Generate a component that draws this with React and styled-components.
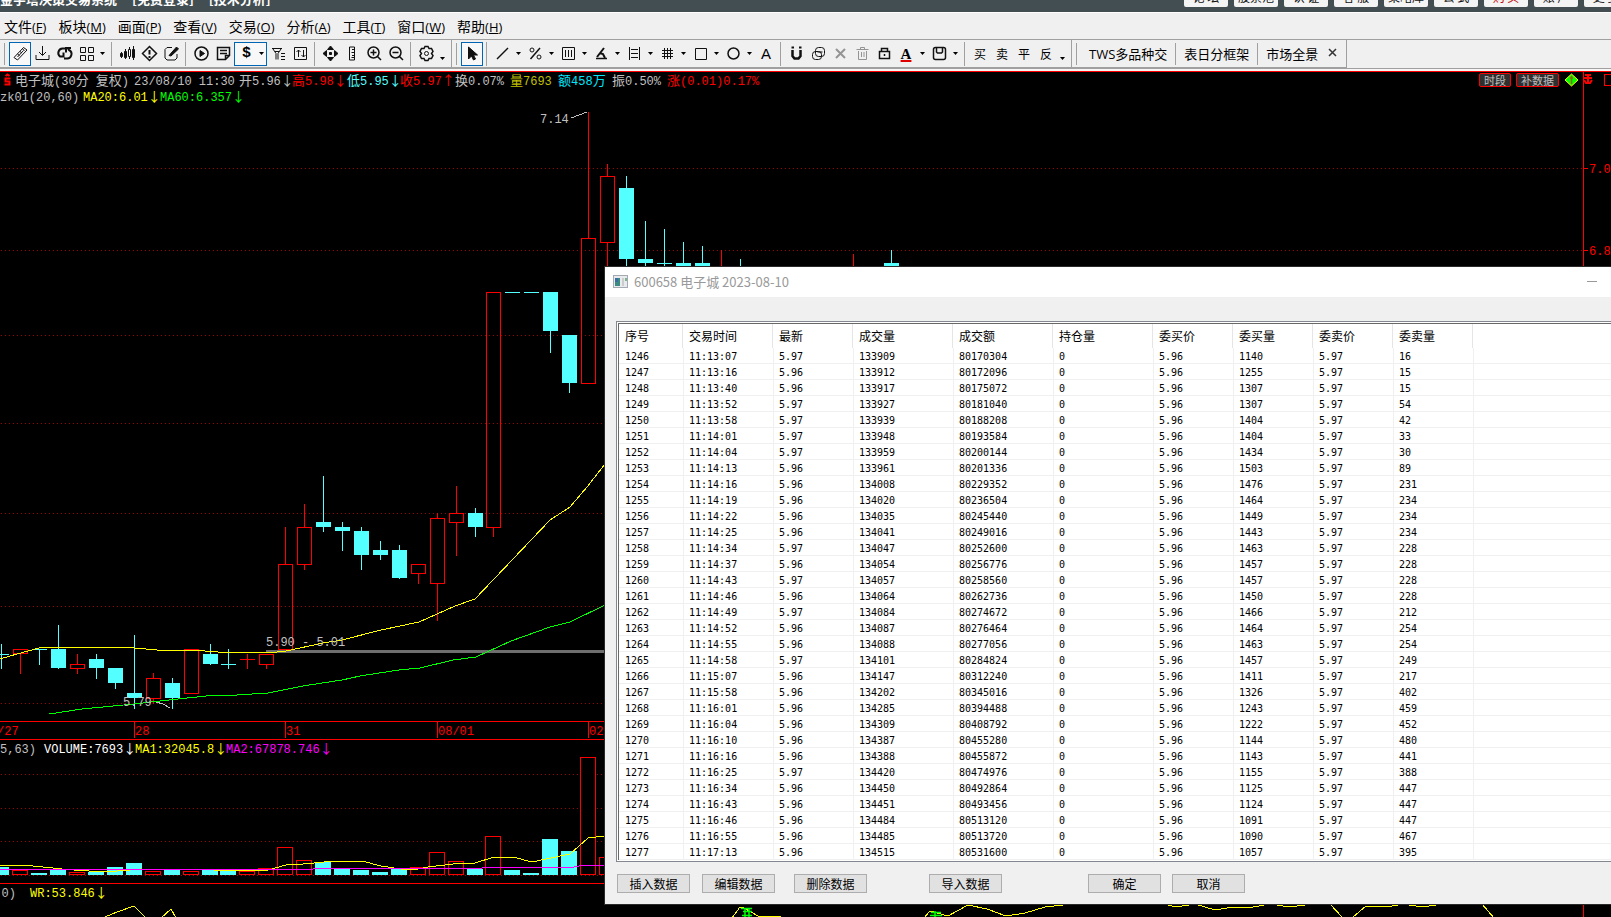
import React from 'react';
import styled, { createGlobalStyle } from 'styled-components';

const RED = '#ff0000';
const CYAN = '#54ffff';
const YELLOW = '#ffff00';
const GREEN = '#00ff00';
const MAGENTA = '#ff00ff';
const GREY = '#c0c0c0';
const DARK_RED = '#a00000';

const menus = [
  ['文件', 'F'], ['板块', 'M'], ['画面', 'P'], ['查看', 'V'], ['交易', 'O'],
  ['分析', 'A'], ['工具', 'T'], ['窗口', 'W'], ['帮助', 'H'],
];

const titleLinks = ['论 坛', '股票池', '认 证', '客 服', '策略库', '公 式', '购 买', '账 户', '更 多'];

const quotes = [
  { text: '开5.96↓', color: GREY, width: 53 },
  { text: '高5.98↓', color: RED, width: 55 },
  { text: '低5.95↓', color: CYAN, width: 53 },
  { text: '收5.97↑', color: RED, width: 55 },
  { text: '换0.07%', color: GREY, width: 55 },
  { text: '量7693', color: '#c0c000', width: 48 },
  { text: '额458万', color: '#00e8ff', width: 54 },
  { text: '振0.50%', color: GREY, width: 55 },
  { text: '涨(0.01)0.17%', color: RED, width: 100 },
];

// [kind, high, body top, body bottom, low]
const candles = [
  ['d', 644, 654, 654, 668], ['u', 649, 649, 653, 673], ['d', 649, 649, 649, 664],
  ['d', 625, 649, 668, 668], ['u', 654, 664, 668, 673], ['d', 654, 659, 668, 678],
  ['d', 668, 668, 683, 688], ['d', 635, 693, 698, 708], ['u', 673, 678, 698, 703],
  ['d', 678, 683, 698, 708], ['u', 649, 649, 693, 693], ['d', 644, 654, 664, 664],
  ['d', 649, 664, 664, 668], ['u', 654, 659, 659, 668], ['u', 654, 654, 664, 668],
  ['u', 527, 564, 649, 649], ['u', 504, 527, 564, 569], ['d', 476, 522, 527, 531],
  ['d', 522, 527, 531, 550], ['d', 527, 531, 555, 569], ['d', 541, 550, 555, 559],
  ['d', 545, 550, 578, 578], ['u', 564, 564, 573, 583], ['u', 513, 518, 583, 620],
  ['u', 486, 513, 522, 555], ['d', 508, 513, 527, 536], ['u', 292, 292, 527, 536],
  ['d', 292, 292, 292, 292], ['d', 292, 292, 292, 292], ['d', 292, 292, 331, 352],
  ['d', 335, 335, 383, 392], ['u', 112, 238, 383, 383], ['u', 164, 176, 242, 280],
  ['d', 176, 188, 259, 280], ['d', 221, 259, 263, 280], ['d', 229, 263, 263, 280],
  ['d', 242, 263, 276, 280], ['d', 246, 263, 276, 280], ['u', 250, 280, 290, 300],
  ['d', 259, 280, 290, 300], null, null, null, null, null,
  ['u', 254, 280, 290, 300], null, ['d', 250, 263, 276, 280],
];

const volumes = [
  ['d', 867], ['u', 870], ['d', 873], ['d', 870], ['u', 872], ['d', 872], ['d', 867], ['d', 863],
  ['u', 871], ['d', 870], ['u', 871], ['d', 870], ['d', 871], ['u', 871], ['u', 868], ['u', 847],
  ['u', 860], ['d', 862], ['d', 869], ['d', 870], ['d', 872], ['d', 869], ['u', 867], ['u', 852],
  ['u', 861], ['d', 869], ['u', 836], ['d', 870], ['d', 873], ['d', 839], ['d', 851], ['u', 757],
  ['u', 857],
];

const ma20 = '0,659 17,654 39,648 68,647 103,647 134,648 169,651 191,650 218,652 249,652 268,653 286,651 323,643 342,640 381,630 419,622 437,614 455,606 475,599 494,579 513,559 550,520 570,507 587,487 605,464';
const ma60 = '49,714 82,709 134,704 169,700 206,696 237,695 268,693 303,686 342,680 360,676 399,670 420,668 453,660 476,657 511,641 550,627 570,622 605,605';
const volMa1 = '0,865 23,865 43,867 62,869 74,870 89,871 117,871 130,870 140,869 214,870 233,871 268,870 286,865 303,864 335,861 362,861 381,866 401,869 418,869 428,867 453,864 475,863 494,857 513,857 532,862 570,854 588,838 605,836';
const volMa2 = '0,869 313,869 314,868 482,868 483,867 574,867 584,865 605,865';
const wrLines = [
  '105,917 117,912 134,906 146,918', '161,918 171,909 176,918',
  '732,918 740,907 744,908 758,916 781,916', '924,918 930,911 948,916 968,905 987,909 1006,916 1025,913 1045,907 1072,904',
  '1100,904 1120,905 1133,904', '1164,904 1176,907 1195,904 1215,910 1233,907 1253,907 1270,904 1290,907 1312,904',
  '1330,904 1343,918', '1352,918 1366,906 1387,907 1403,904 1422,907 1443,904', '1482,904 1494,918',
];

const dates = [['/27', -4, false], ['28', 134, true], ['31', 285, true], ['08/01', 437, true], ['02', 588, true]];

const columns = [
  ['序号', 64], ['交易时间', 90], ['最新', 80], ['成交量', 100], ['成交额', 100],
  ['持仓量', 100], ['委买价', 80], ['委买量', 80], ['委卖价', 80], ['委卖量', 80], ['', null],
];

// time, last, volume, amount, bid volume, ask volume
const trades = [
  ['11:13:07', '5.97', 133909, 80170304, 1140, 16],
  ['11:13:16', '5.96', 133912, 80172096, 1255, 15],
  ['11:13:40', '5.96', 133917, 80175072, 1307, 15],
  ['11:13:52', '5.97', 133927, 80181040, 1307, 54],
  ['11:13:58', '5.97', 133939, 80188208, 1404, 42],
  ['11:14:01', '5.97', 133948, 80193584, 1404, 33],
  ['11:14:04', '5.97', 133959, 80200144, 1434, 30],
  ['11:14:13', '5.96', 133961, 80201336, 1503, 89],
  ['11:14:16', '5.96', 134008, 80229352, 1476, 231],
  ['11:14:19', '5.96', 134020, 80236504, 1464, 234],
  ['11:14:22', '5.96', 134035, 80245440, 1449, 234],
  ['11:14:25', '5.96', 134041, 80249016, 1443, 234],
  ['11:14:34', '5.97', 134047, 80252600, 1463, 228],
  ['11:14:37', '5.96', 134054, 80256776, 1457, 228],
  ['11:14:43', '5.97', 134057, 80258560, 1457, 228],
  ['11:14:46', '5.96', 134064, 80262736, 1450, 228],
  ['11:14:49', '5.97', 134084, 80274672, 1466, 212],
  ['11:14:52', '5.96', 134087, 80276464, 1464, 254],
  ['11:14:55', '5.96', 134088, 80277056, 1463, 254],
  ['11:14:58', '5.97', 134101, 80284824, 1457, 249],
  ['11:15:07', '5.96', 134147, 80312240, 1411, 217],
  ['11:15:58', '5.96', 134202, 80345016, 1326, 402],
  ['11:16:01', '5.96', 134285, 80394488, 1243, 459],
  ['11:16:04', '5.96', 134309, 80408792, 1222, 452],
  ['11:16:10', '5.96', 134387, 80455280, 1144, 480],
  ['11:16:16', '5.96', 134388, 80455872, 1143, 441],
  ['11:16:25', '5.97', 134420, 80474976, 1155, 388],
  ['11:16:34', '5.96', 134450, 80492864, 1125, 447],
  ['11:16:43', '5.96', 134451, 80493456, 1124, 447],
  ['11:16:46', '5.96', 134484, 80513120, 1091, 447],
  ['11:16:55', '5.96', 134485, 80513720, 1090, 467],
  ['11:17:13', '5.96', 134515, 80531600, 1057, 395],
];

const dialogButtons = [
  ['插入数据', 0], ['编辑数据', 12], ['删除数据', 19], ['导入数据', 62], ['确定', 86], ['取消', 11],
];

const icons = {
  ruler: <><path d="M4 14.500l9.500-10 3.500 2.500-9.500 10z" /><path d="M7.500 14l6-6.500M7.500 11l2 1.500M10 8.500l2 1.500M12.500 6l2 1.500" /></>,
  download: <><path d="M10.500 3v9M7 9l3.500 3.500L14 9M4 12v4.500h13V12" /></>,
  refresh: <><path d="M11 5.500H8.500a4.500 4.500 0 0 0-2.500 8h3.500v-4M10 15.500h2.500a4.500 4.500 0 0 0 2.500-8.500l-1-1.500M12 9.500V5h5" strokeWidth="2" /></>,
  grid: <><path d="M4.500 4.500h5v5h-5zM12.500 4.500h5v5h-5zM4.500 12.500h5v5h-5zM12.500 12.500h5v5h-5z" /></>,
  candles: <><path d="M4.500 9v6M8.500 6v10M12.500 4v12M16.500 3v14" /><path d="M3.500 10.500h2v3h-2zM7.500 8.500h2v6h-2zM15.500 6.500h2v8h-2z" fill="currentColor" /><path d="M11.500 6.500h2v7h-2z" fill="#fff" /></>,
  alert: <><path d="M10.500 3.500l7 7-7 7-7-7z" strokeWidth="1.500" /><path d="M10.500 7v4.500M10.500 13v2" strokeWidth="2" /></>,
  edit: <><path d="M11 4.500H6l-2 2V15l2 2h8l2-2v-4" /><path d="M8 12.500l7.500-8.500 2 2L10 13z" fill="currentColor" /></>,
  play: <><circle cx="10.500" cy="10.500" r="6.500" strokeWidth="1.500" /><path d="M9 7.500l4.500 3-4.500 3z" fill="currentColor" /></>,
  note: <><path d="M4.500 4.500h12v8l-4 4h-8zM7 7.500h7M7 10.500h7M12.500 16.500v-4h4" strokeWidth="1.500" /></>,
  filter: <><path d="M4 5.500h10M5 6l3 4.500v6M13 6l-3 4.500v6M7 8.500h4M13 10.500h4M13 13.500h4M13 16.500h4" /></>,
  sort: <><path d="M4.500 4.500h12v12h-12zM8.500 14V7M6.500 9l2-2 2 2M13.500 7v7M11.500 12l2 2 2-2" /></>,
  move: <path d="M10.500 3l3 3.500h-6zM10.500 18l3-3.500h-6zM3 10.500l3.500-3v6zM18 10.500l-3.500-3v6zM9.500 9.500h2v2h-2z" fill="currentColor" />,
  measure: <><path d="M7.500 4v13h5V4zM10 6.500h2.500M9.500 9.500h3M10 12.500h2.500M9.500 14.500h3" /></>,
  zoomIn: <><circle cx="9.500" cy="9.500" r="5.500" strokeWidth="1.500" /><path d="M13.500 13.500l3.500 3.500M6.500 9.500h6M9.500 6.500v6" strokeWidth="1.500" /></>,
  zoomOut: <><circle cx="9.500" cy="9.500" r="5.500" strokeWidth="1.500" /><path d="M13.500 13.500l3.500 3.500M6.500 9.500h6" strokeWidth="1.500" /></>,
  gear: <><path d="M9 3.500h3l1 2 2.500 0 1.500 3-1.500 2 1.500 2-1.500 3H13l-1 2H9l-1-2H5.500l-1.500-3 1.500-2-1.500-2 1.500-3H8z" strokeWidth="1.500" /><circle cx="10.500" cy="10.500" r="2" /></>,
  cursor: <path d="M6.500 4v12l3-3 2 4 2-1-2-4h4z" fill="currentColor" />,
  line: <path d="M5 16L16 5" strokeWidth="1.500" />,
  percent: <><circle cx="7" cy="7" r="2" /><circle cx="14" cy="14" r="2" /><path d="M5.500 16L15 5" strokeWidth="1.500" /></>,
  bars: <><path d="M4.500 4.500h12v12h-12z" /><path d="M7.500 7v7M10.500 7v7M13.500 7v7" /></>,
  angle: <><path d="M5 15.500h11" strokeWidth="1.500" /><path d="M6 14l7-9M8.500 10l3.500 1 2 4" strokeWidth="2" /></>,
  levels: <><path d="M5.500 4v13M15.500 4v13M7 6.500h7M7 10.500h7M7 14.500h7" /></>,
  hash: <><path d="M7.500 5v11M10.500 5v11M13.500 5v11M5 7.500h11M5 10.500h11M5 13.500h11" /></>,
  square: <path d="M5.500 5.500h11v11h-11z" />,
  circle: <circle cx="10.500" cy="10.500" r="5.500" strokeWidth="1.500" />,
  magnet: <><path d="M6.500 7v6l2 2.500h4l2-2.500V7" strokeWidth="2.500" /><path d="M5.500 4.500h2.500M13 4.500h2.500" strokeWidth="2" /></>,
  copy: <><rect x="4.500" y="8.500" width="9" height="8" rx="3" /><rect x="7.500" y="4.500" width="9" height="9" rx="3" /><path d="M9.500 9h5" /></>,
  cross: <path d="M6 6l9 9M15 6l-9 9" strokeWidth="2" stroke="#949494" />,
  trash: <path d="M4.500 6.500h12M8.500 6V4.500h4V6M6.500 8v8.500h8V8M9.500 9v5M12 9v5" stroke="#949494" />,
  lock: <><path d="M5.500 8.500h10v7h-10zM7.500 8V5.500h6V8M10.500 11v2" strokeWidth="1.500" /></>,
  save: <><rect x="4.500" y="4.500" width="12" height="12" rx="2" strokeWidth="1.500" /><path d="M7.500 5v4l1 1h4l1-1V5" strokeWidth="1.500" /></>,
};

// a name is a drawn icon, {t} a text glyph, 'v' a drop arrow, '_' a low arrow, '|' a separator
const toolsA = ['*ruler', 'download', 'refresh', 'grid', 'v', '|', 'candles', 'alert', 'edit', '|', 'play', 'note', '$', 'filter', 'sort', '|', 'move', 'measure', 'zoomIn', 'zoomOut', '|', 'gear', '_'];
const toolsB = ['*cursor', '|', 'line', 'v', 'percent', 'v', 'bars', 'v', 'angle', 'v', 'levels', 'v', 'hash', 'v', 'square', 'v', 'circle', 'v', { t: 'A' }, '|', 'magnet', 'copy', 'cross', 'trash', 'lock', { t: 'A', red: true }, 'v', 'save', 'v', '|', { t: '买' }, { t: '卖' }, { t: '平' }, { t: '反' }, '_'];

const centerOf = i => Math.floor(1.8 + 18.93 * i);

// Han glyphs and arrows get their own size, as in the terminal's bitmap font
const Mixed = ({ children }) => (
  children.split(/([\u4e00-\u9fff↑↓]+)/).filter(Boolean).map((part, i) => (
    /[\u4e00-\u9fff↑↓]/.test(part) ? <Han key={i}>{part}</Han> : <React.Fragment key={i}>{part}</React.Fragment>
  ))
);

const Tools = ({ items }) => items.map((item, i) => {
  if (item === '|') return <Separator key={i} />;
  if (item === 'v' || item === '_') {
    return <Caret key={i} $low={item === '_'} aria-label="more"><CaretArrow /></Caret>;
  }
  if (item === '$') {
    return (
      <DollarButton key={i} aria-label="dollar"><Dollar>$</Dollar><CaretArrow /></DollarButton>
    );
  }
  if (item.t) return <TextTool key={i} $red={item.red} $latin={item.t === 'A'}>{item.t}</TextTool>;
  const active = item[0] === '*';
  const name = active ? item.slice(1) : item;
  return (
    <ToolButton key={i} $active={active} aria-label={name}>
      <Icon viewBox="0 0 21 21">{icons[name]}</Icon>
    </ToolButton>
  );
});

const CaretArrow = () => (
  <svg width="5" height="3" viewBox="0 0 5 3"><path d="M0 0h5L2.500 3z" fill="#000" /></svg>
);

const Grid = ({ rows }) => rows.map(y => (
  <line key={y} x1="1" x2="100%" y1={y + 0.5} y2={y + 0.5} stroke={DARK_RED} strokeDasharray="1 3" />
));

const Candle = ({ index, data }) => {
  const [kind, high, top, bottom, low] = data;
  const x = centerOf(index);
  const color = kind === 'u' ? RED : CYAN;
  return (
    <g fill={color}>
      <rect x={x} y={high} width="1" height={top - high} />
      <rect x={x} y={bottom} width="1" height={low - bottom + 1} />
      {kind === 'd' || top === bottom
        ? <rect x={x - 7} y={top} width="15" height={Math.max(bottom - top, 1)} />
        : <rect x={x - 6.5} y={top + 0.5} width="14" height={bottom - top} fill="none" stroke={RED} />}
    </g>
  );
};

const Volume = ({ index, data }) => {
  const [kind, top] = data;
  const x = centerOf(index);
  return kind === 'd'
    ? <rect x={x - 8} y={top} width="16" height={875 - top} fill={CYAN} />
    : <rect x={x - 7.5} y={top + 0.5} width="15" height={874 - top} fill="#000" stroke={RED} />;
};

const Line = ({ points, color }) => <polyline points={points} fill="none" stroke={color} shapeRendering="crispEdges" />;

const PricePane = () => (
  <Pane>
    <Plot $height={617}>
      <g transform="translate(0 -104)">
        <Grid rows={[168, 250, 335, 423, 513, 606, 703]} />
        {candles.map((c, i) => c && <Candle key={i} index={i} data={c} />)}
        <rect x="266" y="650" width="400" height="3" fill="#6e6e6e" />
        <Line points={ma20} color={YELLOW} />
        <Line points={ma60} color={GREEN} />
        <PlotText x="540" y="123">7.14</PlotText>
        <Line points="571,118 587,112" color={GREY} />
        <PlotText x="266" y="646">5.90 - 5.01</PlotText>
        <PlotText x="123" y="706">5.79</PlotText>
        <Line points="156,702 163,704 170,708" color={GREY} />
      </g>
    </Plot>
    <PriceAxis>
      <svg width="28" height="617">
        <path d="M0 64.500h4M0 146.500h4" stroke={RED} />
        <AxisText x="5" y="69">7.0</AxisText>
        <AxisText x="5" y="151">6.8</AxisText>
      </svg>
    </PriceAxis>
  </Pane>
);

const VolumePane = () => (
  <Pane>
    <Plot $height={127}>
      <g transform="translate(0 -756)">
        <Grid rows={[774, 808, 841, 875]} />
        {volumes.map((v, i) => <Volume key={i} index={i} data={v} />)}
        <Line points={volMa1} color={YELLOW} />
        <Line points={volMa2} color={MAGENTA} />
      </g>
    </Plot>
    <PriceAxis />
  </Pane>
);

const Chart = () => (
  <ChartArea>
    <ChartHeader>
      <Readings>
        <ReadingRow>
          <DollarMark viewBox="0 0 11 14"><path d="M3.500 3l2-1.500 2 1.500M8.500 5.500h-5v3h4v3h-5" /></DollarMark>
          <Reading $width={119} $color={GREY}><Mixed>电子城(30分 复权)</Mixed></Reading>
          <Reading $width={105} $color={GREY}>23/08/10 11:30</Reading>
          {quotes.map(q => (
            <Reading key={q.text} $width={q.width} $color={q.color}><Mixed>{q.text}</Mixed></Reading>
          ))}
        </ReadingRow>
        <ReadingRow>
          <Reading $width={83} $color={GREY}>zk01(20,60)</Reading>
          <Reading $width={77} $color={YELLOW}><Mixed>MA20:6.01↓</Mixed></Reading>
          <Reading $width={90} $color={GREEN}><Mixed>MA60:6.357↓</Mixed></Reading>
        </ReadingRow>
      </Readings>
      <HeaderActions>
        <ChartButton>时段</ChartButton>
        <ChartButton>补数据</ChartButton>
        <svg width="15" height="14" viewBox="0 0 15 14">
          <path d="M7.500 1l6.500 6-6.500 6L1 7z" fill={GREEN} stroke={YELLOW} />
          <path d="M7.500 3v8M6 5h3" stroke="#a06000" strokeWidth="1.500" />
        </svg>
      </HeaderActions>
      <PriceAxis>
        <svg width="28" height="16" viewBox="0 0 28 16">
          <path d="M4 2v10M0 6h8M1 3h6M0 8l2 3h4l2-3" fill="none" stroke={RED} strokeWidth="2" />
          <rect x="20.500" y="2.500" width="12" height="11" fill="none" stroke={RED} />
        </svg>
      </PriceAxis>
    </ChartHeader>
    <PricePane />
    <DateAxis>
      <svg width="100%" height="17">
        {dates.map(([label, x, tick]) => (
          <g key={label}>
            {tick && <rect x={x} width="1" height="16" fill={RED} />}
            <AxisText x={x + 1} y="13">{label}</AxisText>
          </g>
        ))}
      </svg>
    </DateAxis>
    <IndicatorHeader>
      <LeadReading $width={44} $gap={8}>(5,63)</LeadReading>
      <Reading $width={91} $color="#fff"><Mixed>VOLUME:7693↓</Mixed></Reading>
      <Reading $width={91} $color={YELLOW}><Mixed>MA1:32045.8↓</Mixed></Reading>
      <Reading $width={110} $color={MAGENTA}><Mixed>MA2:67878.746↓</Mixed></Reading>
    </IndicatorHeader>
    <VolumePane />
    <IndicatorHeader $ruled>
      <LeadReading $width={30} $gap={14}>.0)</LeadReading>
      <Reading $width={100} $color={YELLOW}><Mixed>WR:53.846↓</Mixed></Reading>
    </IndicatorHeader>
    <Pane>
      <Plot $height={18}>
        <g transform="translate(0 -899)">
          {wrLines.map(points => <Line key={points} points={points} color={YELLOW} />)}
          <path d="M741 908.500h11M743 911.500h9M745 908v9M749 909v8M742 915.500h10M931 912.500h10M930 915.500h12M935 911v6" stroke={GREEN} strokeWidth="1.500" />
        </g>
      </Plot>
      <PriceAxis />
    </Pane>
  </ChartArea>
);

const TradesDialog = () => (
  <Dialog role="dialog" aria-label="600658 电子城 2023-08-10">
    <DialogTitle>
      <svg width="15" height="13" viewBox="0 0 15 13">
        <rect x="0.500" y="0.500" width="14" height="12" fill="#e8eaee" stroke="#a4a9b2" />
        <rect x="2" y="3" width="5" height="8" fill="#3d8a80" />
        <rect x="2" y="3" width="3" height="4" fill="#3a6ea0" />
        <rect x="9" y="3" width="2" height="8" fill="#ccc" />
        <rect x="12" y="3" width="2" height="3" fill="#7ab58c" />
      </svg>
      <DialogCaption>600658 电子城 2023-08-10</DialogCaption>
      <MinimizeButton aria-label="minimize" />
    </DialogTitle>
    <ListFrame>
      <ListBody>
        <Table>
          <colgroup>
            {columns.map(([label, width]) => <Col key={label} $width={width} />)}
          </colgroup>
          <thead>
            <tr>{columns.map(([label]) => <Th key={label} scope="col">{label}</Th>)}</tr>
          </thead>
          <tbody>
            {trades.map(([time, last, volume, amount, bid, ask], i) => (
              <tr key={time}>
                <Td>{1246 + i}</Td>
                <Td>{time}</Td>
                <Td>{last}</Td>
                <Td>{volume}</Td>
                <Td>{amount}</Td>
                <Td>0</Td>
                <Td>5.96</Td>
                <Td>{bid}</Td>
                <Td>5.97</Td>
                <Td>{ask}</Td>
                <Td />
              </tr>
            ))}
          </tbody>
        </Table>
      </ListBody>
    </ListFrame>
    <DialogFooter>
      {dialogButtons.map(([label, gap]) => <DialogButton key={label} $gap={gap}>{label}</DialogButton>)}
    </DialogFooter>
  </Dialog>
);

const App = () => (
  <Screen>
    <GlobalStyle />
    <TitleBar>
      <Title>
        <span>金字塔决策交易系统</span>
        <span>[免费登录]</span>
        <span>[技术分析]</span>
      </Title>
      <TitleLinks>
        {titleLinks.map(label => <TitleLink key={label} $red={label === '购 买'}>{label}</TitleLink>)}
      </TitleLinks>
    </TitleBar>
    <MenuBar>
      {menus.map(([label, hot]) => (
        <MenuItem key={label}><MenuHan>{label}</MenuHan>(<u>{hot}</u>)</MenuItem>
      ))}
    </MenuBar>
    <ToolBar>
      <ToolGroup><Tools items={toolsA} /></ToolGroup>
      <ToolGroup><Tools items={toolsB} /></ToolGroup>
      <ToolGroup>
        <FrameTab>TWS多品种交</FrameTab>
        <FrameTab>表日分框架</FrameTab>
        <FrameTab>市场全景</FrameTab>
        <CloseTab aria-label="close">
          <svg width="9" height="9" viewBox="0 0 9 9"><path d="M1 1l7 7M8 1L1 8" stroke="#333" strokeWidth="1.500" /></svg>
        </CloseTab>
      </ToolGroup>
    </ToolBar>
    <Workspace>
      <Chart />
      <TradesDialog />
    </Workspace>
  </Screen>
);

const GlobalStyle = createGlobalStyle`
  * {
    box-sizing: border-box;
  }
  body {
    margin: 0;
    background: #000;
    overflow: hidden;
  }
  button {
    margin: 0;
    padding: 0;
    border: none;
    background: none;
    font: inherit;
    color: inherit;
  }
  svg {
    display: block;
    flex: none;
  }
`;
const Screen = styled.div`
  display: flex;
  flex-direction: column;
  min-height: 100vh;
  font-family: "Noto Sans CJK SC", sans-serif;
  font-size: 12px;
  white-space: nowrap;
`;
const TitleBar = styled.header`
  display: flex;
  justify-content: space-between;
  height: 13px;
  overflow: hidden;
  background: #434e53;
  border-bottom: 1px solid #fff;
`;
const Title = styled.div`
  display: flex;
  gap: 15px;
  margin-top: -9px;
  color: #fff;
  font-size: 13px;
  font-weight: bold;
  line-height: 16px;
`;
const TitleLinks = styled.nav`
  display: flex;
  gap: 6px;
  margin: -13px -17px 0 0;
`;
const TitleLink = styled.button`
  width: 44px;
  height: 20px;
  border-radius: 2px;
  background: #f4f4f4;
  color: ${({ $red }) => ($red ? '#c00000' : '#111')};
  line-height: 20px;
`;
const MenuBar = styled.nav`
  display: flex;
  gap: 12px;
  height: 26px;
  padding: 0 4px;
  background: #f0f0f0;
  color: #000;
`;
const MenuItem = styled.button`
  font-family: "Open Sans", "Noto Sans CJK SC", sans-serif;
  font-size: 13px;
  line-height: 26px;
  u {
    text-underline-offset: 1px;
  }
`;
const MenuHan = styled.span`
  font-family: "Noto Sans CJK SC", sans-serif;
  font-size: 14px;
`;
const ToolBar = styled.div`
  display: flex;
  height: 32px;
  background: #f0f0f0;
  border-top: 1px solid #a0a0a0;
  border-bottom: 2px solid #f6f6f6;
  box-shadow: inset 0 -1px #a0a0a0;
`;
const ToolGroup = styled.div`
  display: flex;
  align-items: center;
  height: 29px;
  padding: 0 3px 0 9px;
  border-right: 1px solid #a0a0a0;
  border-bottom: 2px solid #a0a0a0;
  background: linear-gradient(#a0a0a0, #a0a0a0) 4px 3px / 1px 22px no-repeat, #f0f0f0;
`;
const ToolButton = styled.button`
  display: grid;
  place-items: center;
  width: 22px;
  height: 24px;
  border: ${({ $active }) => ($active ? '1px solid #0066b4' : 'none')};
  background: ${({ $active }) => ($active ? '#f8f8f8' : 'none')};
`;
const Icon = styled.svg`
  width: 21px;
  height: 21px;
  fill: none;
  stroke: #111;
  color: #111;
`;
const TextTool = styled.button`
  width: 22px;
  height: 24px;
  color: #000;
  font-family: ${({ $red, $latin }) => ($red ? '"Liberation Serif", serif' : $latin ? '"Liberation Sans", sans-serif' : '"Noto Sans CJK SC", sans-serif')};
  font-size: ${({ $latin }) => ($latin ? 15 : 12)}px;
  font-weight: ${({ $red }) => ($red ? 'bold' : 'normal')};
  line-height: 16px;
  text-decoration: ${({ $red }) => ($red ? 'underline 2px #e00000' : 'none')};
`;
const Caret = styled.button`
  display: grid;
  place-items: center;
  width: 11px;
  height: 24px;
  padding-top: ${({ $low }) => ($low ? 10 : 0)}px;
`;
const DollarButton = styled(ToolButton)`
  display: flex;
  align-items: center;
  justify-content: space-between;
  width: 33px;
  padding: 0 2px 0 7px;
  border: 1px solid #0066b4;
  background: #f8f8f8;
`;
const Dollar = styled.span`
  font-family: "Liberation Mono", monospace;
  font-size: 15px;
  font-weight: bold;
`;
const Separator = styled.span`
  width: 1px;
  height: 24px;
  margin: 0 4px 0 3px;
  background: #a0a0a0;
`;
const FrameTab = styled.button`
  padding: 0 8px;
  height: 22px;
  color: #000;
  font-family: "Open Sans", "Noto Sans CJK SC", sans-serif;
  font-size: 13px;
  line-height: 22px;
  & + & {
    border-left: 1px solid #a0a0a0;
  }
`;
const CloseTab = styled.button`
  padding: 0 6px 3px 2px;
`;
const Workspace = styled.main`
  position: relative;
  display: flex;
  flex: 1;
  flex-direction: column;
`;
const ChartArea = styled.section`
  display: flex;
  flex: 1;
  flex-direction: column;
  overflow: hidden;
  border-top: 1px solid ${RED};
  background: #000;
  font-family: "Liberation Mono", "Noto Sans CJK SC", monospace;
  font-size: 12px;
  line-height: 16px;
`;
const ChartHeader = styled.div`
  display: flex;
  height: 32px;
`;
const Readings = styled.div`
  flex: 1;
`;
const ReadingRow = styled.div`
  display: flex;
  align-items: baseline;
  height: 16px;
`;
const Reading = styled.span`
  width: ${({ $width }) => $width}px;
  color: ${({ $color }) => $color};
`;
const LeadReading = styled.span`
  display: flex;
  justify-content: flex-end;
  width: ${({ $width }) => $width}px;
  padding-right: ${({ $gap }) => $gap}px;
  color: ${GREY};
`;
const Han = styled.span`
  font-family: "Noto Sans CJK SC", sans-serif;
  font-size: 13px;
`;
const DollarMark = styled.svg`
  align-self: flex-start;
  width: 11px;
  height: 14px;
  margin: 1px 2px;
  fill: none;
  stroke: ${RED};
  stroke-width: 2;
`;
const HeaderActions = styled.div`
  display: flex;
  align-items: flex-start;
  gap: 5px;
  padding: 1px 4px;
`;
const ChartButton = styled.button`
  height: 14px;
  padding: 0 4px;
  border: 1px solid ${RED};
  border-radius: 2px;
  background: #303030;
  color: #c0c0c0;
  font-family: "Noto Sans CJK SC", sans-serif;
  font-size: 11px;
  line-height: 12px;
`;
const PriceAxis = styled.div`
  flex: none;
  width: 28px;
  overflow: hidden;
  border-left: 1px solid ${RED};
`;
const Pane = styled.div`
  display: flex;
`;
const Plot = styled.svg`
  flex: 1;
  min-width: 0;
  height: ${({ $height }) => $height}px;
`;
const PlotText = styled.text`
  fill: ${GREY};
  font-family: "Liberation Mono", monospace;
  font-size: 12px;
`;
const AxisText = styled(PlotText)`
  fill: ${RED};
`;
const DateAxis = styled.div`
  border-top: 1px solid ${RED};
  border-bottom: 1px solid ${RED};
`;
const IndicatorHeader = styled.div`
  display: flex;
  align-items: baseline;
  height: 16px;
  border-top: ${({ $ruled }) => ($ruled ? `1px solid ${RED}` : 'none')};
`;
const Dialog = styled.section`
  position: absolute;
  top: 195px;
  right: 0;
  left: 604px;
  border: 1px solid #2a2a2a;
  border-right: none;
  background: #f0f0f0;
  color: #000;
`;
const DialogTitle = styled.div`
  display: flex;
  align-items: center;
  gap: 6px;
  height: 30px;
  padding: 0 14px 2px 8px;
  background: #fff;
`;
const DialogCaption = styled.h1`
  flex: 1;
  margin: 0;
  color: #999;
  font-size: 13px;
  font-weight: normal;
`;
const MinimizeButton = styled.button`
  width: 10px;
  height: 1px;
  background: #999;
`;
const ListFrame = styled.div`
  margin: 24px 0 0 11px;
  padding: 1px 0 1px 1px;
  border: 1px solid #828790;
  border-right: none;
  background: #fff;
`;
const ListBody = styled.div`
  border-top: 1px solid #696969;
  border-left: 1px solid #696969;
`;
const Table = styled.table`
  width: 100%;
  border-spacing: 0;
  table-layout: fixed;
`;
const Col = styled.col`
  width: ${({ $width }) => ($width ? `${$width}px` : 'auto')};
`;
const Th = styled.th`
  height: 24px;
  padding: 0 0 0 6px;
  border-right: 1px solid #e5e5e5;
  font-weight: normal;
  line-height: 18px;
  text-align: left;
  &:last-child {
    border-right: none;
  }
`;
const Td = styled.td`
  height: 16px;
  padding: 2px 0 0 5px;
  border-bottom: 1px solid #f0f0f0;
  border-left: 1px solid #f0f0f0;
  font-family: "DejaVu Sans Mono", monospace;
  font-size: 10px;
  line-height: 13px;
  &:first-child {
    padding-left: 6px;
    border-left: none;
  }
`;
const DialogFooter = styled.div`
  display: flex;
  padding: 12px 12px 11px;
`;
const DialogButton = styled.button`
  width: 73px;
  height: 19px;
  margin-left: ${({ $gap }) => $gap}px;
  border: 1px solid #adadad;
  background: #e1e1e1;
  line-height: 16px;
`;

export default App;
